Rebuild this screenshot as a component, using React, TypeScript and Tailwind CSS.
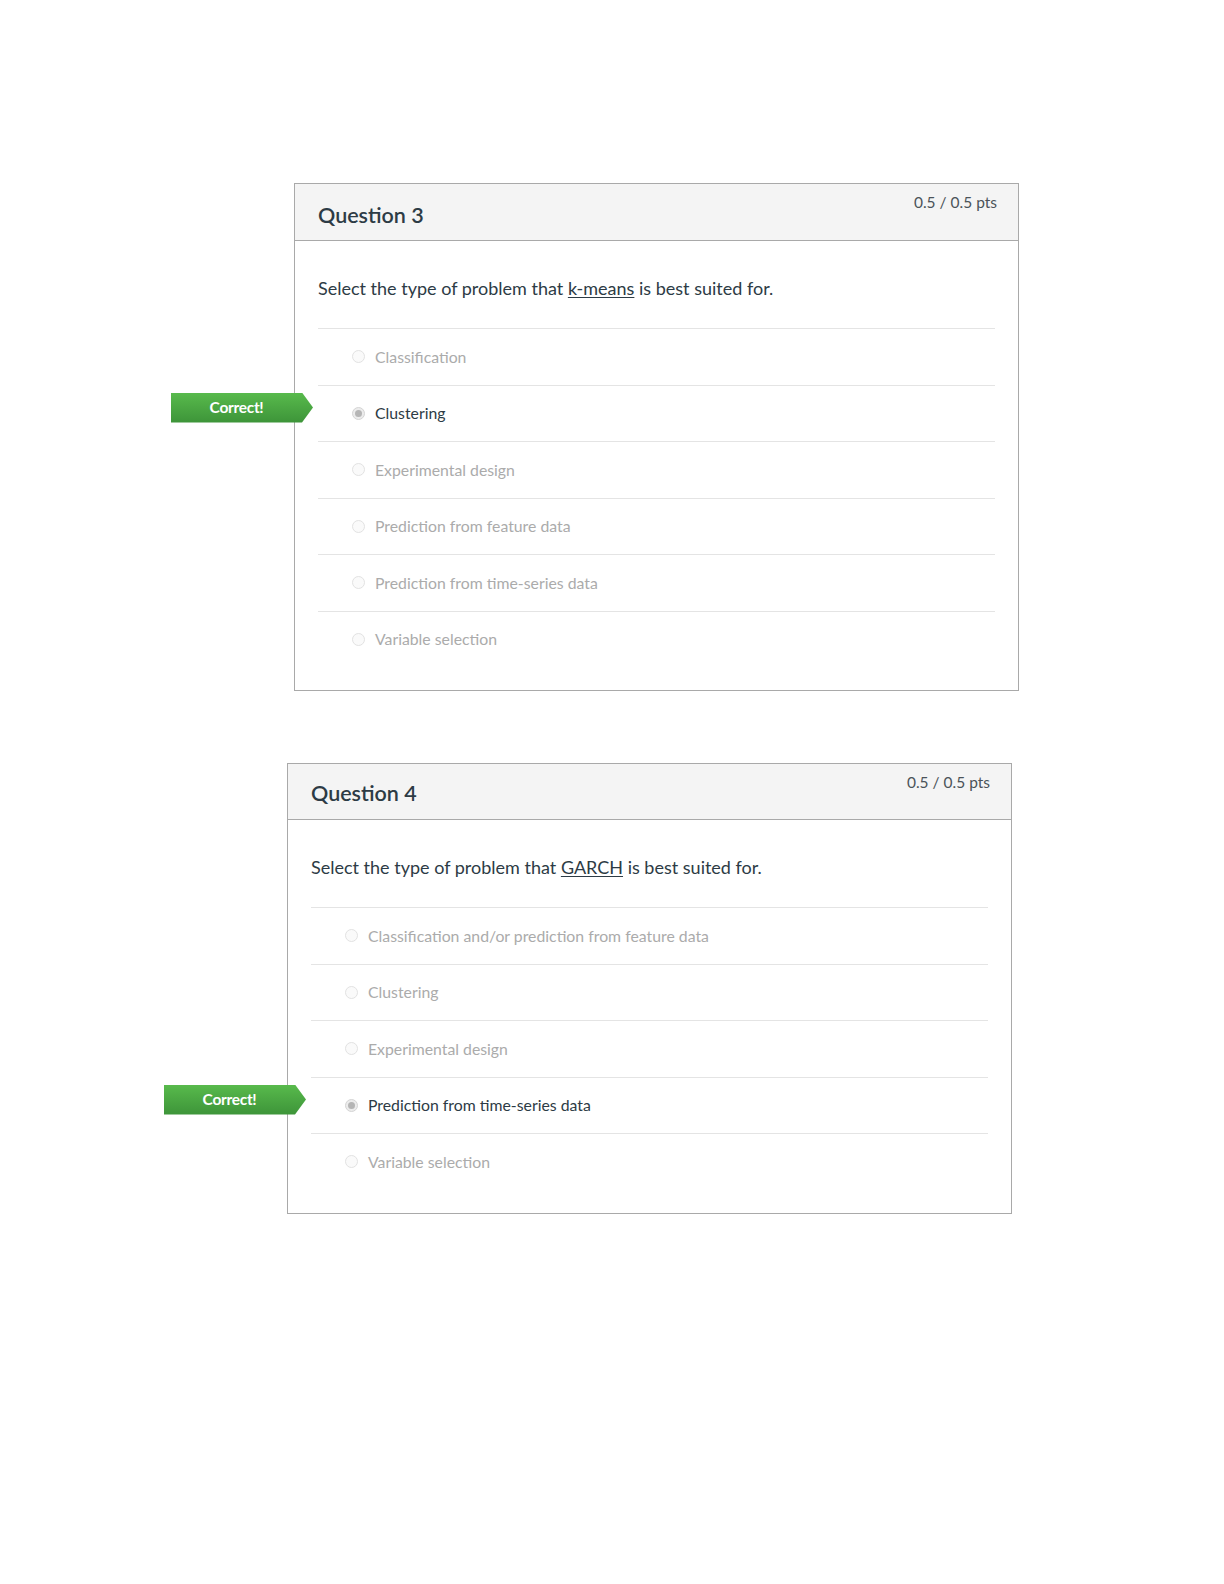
import React from "react";

type Opt = { label: string; selected?: boolean };

function Radio({ selected }: { selected?: boolean }) {
  return selected ? (
    <span className="flex h-[13px] w-[13px] shrink-0 items-center justify-center rounded-full border border-[#d4d4d4] bg-[#ececec]">
      <span className="h-[7px] w-[7px] rounded-full bg-[#b5b5b5]" />
    </span>
  ) : (
    <span className="h-[13px] w-[13px] shrink-0 rounded-full border border-[#e2e2e2] bg-[#fafafa]" />
  );
}

function Badge() {
  return (
    <div className="absolute left-[-147px] top-[7px] z-10 flex h-[30px] w-[142px] bg-linear-to-b from-[#58ba4c] to-[#3d9439] [clip-path:polygon(0_0,131px_0,142px_50%,131px_100%,0_100%)]">
      <span className="flex w-[131px] items-center justify-center text-[15.5px] font-bold tracking-[-0.3px] text-white">
        Correct!
      </span>
    </div>
  );
}

function Card({
  title,
  before,
  link,
  options,
  headerH,
  titlePt,
  pb,
  className,
}: {
  title: string;
  before: string;
  link: string;
  options: Opt[];
  headerH: string;
  titlePt: string;
  pb: string;
  className: string;
}) {
  return (
    <div className={`relative w-[725px] border border-[#a9a9a9] bg-white ${className}`}>
      <div className={`flex items-start justify-between border-b border-[#a9a9a9] bg-[#f4f4f4] pl-[23px] pr-[21px] ${headerH}`}>
        <h2 className={`text-[21.5px] leading-[26px] font-semibold text-[#2d3b45] ${titlePt}`}>{title}</h2>
        <span className="pt-[8px] text-[15.5px] leading-[20px] text-[#4b5359]">0.5 / 0.5 pts</span>
      </div>
      <div className={`px-[23px] pt-[35px] ${pb}`}>
        <p className="text-[18px] leading-[24px] text-[#2d3b45]">
          {before}
          <span className="underline decoration-[#2d3b45] underline-offset-[2px]">{link}</span> is best suited for.
        </p>
        <div className="mt-[28px]">
          {options.map((o) => (
            <div
              key={o.label}
              className="relative flex h-[56.5px] items-center gap-[10px] border-t border-[#e4e4e4] pl-[34px]"
            >
              {o.selected && <Badge />}
              <Radio selected={o.selected} />
              <span className={`text-[15.8px] leading-[20px] ${o.selected ? "text-[#2d3b45]" : "text-[#ababab]"}`}>
                {o.label}
              </span>
            </div>
          ))}
        </div>
      </div>
    </div>
  );
}

export default function App() {
  return (
    <div className="h-[1584px] w-[1224px] bg-white pt-[183px] [font-family:Lato,'Liberation_Sans',sans-serif]">
      <Card
        className="ml-[294px]"
        title="Question 3"
        before="Select the type of problem that "
        link="k-means"
        headerH="h-[57px]"
        titlePt="pt-[18px]"
        pb="pb-[23px]"
        options={[
          { label: "Classification" },
          { label: "Clustering", selected: true },
          { label: "Experimental design" },
          { label: "Prediction from feature data" },
          { label: "Prediction from time-series data" },
          { label: "Variable selection" },
        ]}
      />
      <Card
        className="ml-[287px] mt-[72px]"
        title="Question 4"
        before="Select the type of problem that "
        link="GARCH"
        headerH="h-[56px]"
        titlePt="pt-[16px]"
        pb="pb-[23px]"
        options={[
          { label: "Classification and/or prediction from feature data" },
          { label: "Clustering" },
          { label: "Experimental design" },
          { label: "Prediction from time-series data", selected: true },
          { label: "Variable selection" },
        ]}
      />
    </div>
  );
}
